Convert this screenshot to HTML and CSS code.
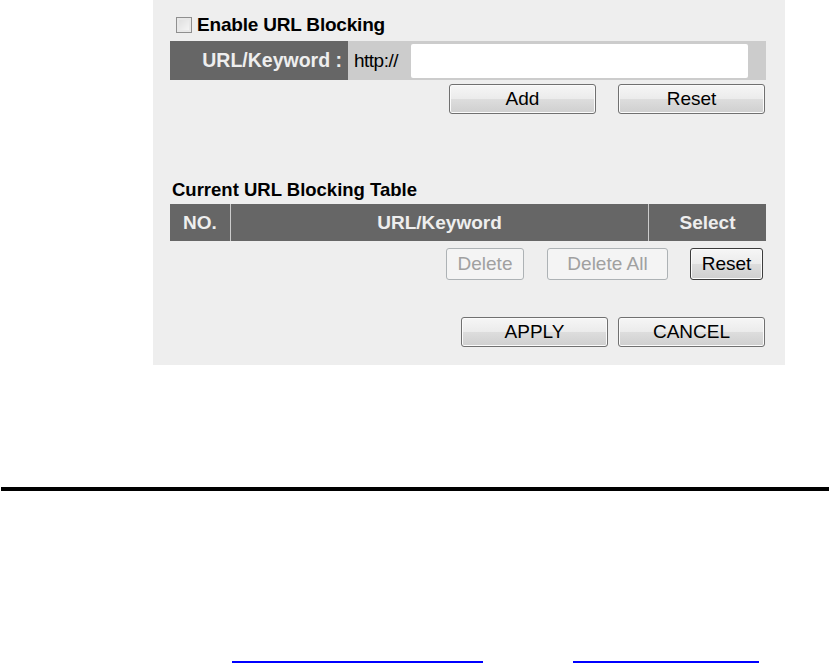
FILE: index.html
```html
<!DOCTYPE html>
<html>
<head>
<meta charset="utf-8">
<link rel="stylesheet" href="styles.css">
</head>
<body>
<div class="panel">
  <label class="enable"><span class="chk"></span>Enable URL Blocking</label>
  <div class="urlrow">
    <div class="urllabel">URL/Keyword :</div>
    <div class="urlcell"><span class="proto">http://</span><span class="input"></span></div>
  </div>
  <div class="btnrow r1">
    <span class="btn w147">Add</span>
    <span class="btn w147">Reset</span>
  </div>
  <div class="tabletitle">Current URL Blocking Table</div>
  <div class="thead">
    <div class="th no">NO.</div>
    <div class="th kw">URL/Keyword</div>
    <div class="th sel">Select</div>
  </div>
  <div class="btnrow r2">
    <span class="btn dis wdel">Delete</span>
    <span class="btn dis wdelall">Delete All</span>
    <span class="btn dark wreset">Reset</span>
  </div>
  <div class="btnrow r3">
    <span class="btn w147">APPLY</span>
    <span class="btn w147">CANCEL</span>
  </div>
</div>
<div class="rule"></div>
<div class="links">
  <a class="lnk l1" href="#"></a>
  <a class="lnk l2" href="#"></a>
</div>
</body>
</html>
```
FILE: styles.css
```css
html, body { margin: 0; padding: 0; background: #ffffff; }
body { width: 829px; height: 664px; overflow: hidden; font-family: "Liberation Sans", Arial, sans-serif; }

.panel {
  margin-left: 153px;
  width: 632px;
  height: 365px;
  background: #eeeeee;
  padding: 14px 19px 0 17px;
  box-sizing: border-box;
  display: flex;
  flex-direction: column;
}

.enable {
  display: flex;
  align-items: center;
  height: 22px;
  font-weight: bold;
  font-size: 19px;
  color: #000;
  letter-spacing: -0.2px;
}
.chk {
  width: 14px;
  height: 14px;
  border: 1px solid #8f8f8f;
  background: linear-gradient(135deg, #dcdcdc, #f8f8f8);
  box-shadow: inset 0 0 0 2px #e8e8e8;
  margin: 0 5px 0 6px;
}

.urlrow {
  display: flex;
  height: 39px;
  margin-top: 5px;
}
.urllabel {
  width: 178px;
  background: #666666;
  color: #eeeeee;
  font-weight: bold;
  font-size: 19.5px;
  display: flex;
  align-items: center;
  justify-content: flex-end;
  padding-right: 6px;
  box-sizing: border-box;
}
.urlcell {
  flex: 1;
  background: #cccccc;
  display: flex;
  align-items: center;
  padding: 0 18px 0 6px;
}
.proto { font-size: 19px; color: #000; width: 57px; letter-spacing: -0.5px; }
.input {
  flex: 1;
  height: 34px;
  background: #ffffff;
  border-radius: 2px;
}

.btnrow {
  display: flex;
  justify-content: flex-end;
}
.r1 { margin-top: 4px; gap: 22px; padding-right: 1px; }
.r2 { margin-top: 7px; gap: 0; padding-right: 3px; }
.r3 { margin-top: 37px; gap: 10px; padding-right: 1px; }

.btn {
  display: flex;
  align-items: center;
  justify-content: center;
  box-sizing: border-box;
  height: 30px;
  border: 1px solid #707070;
  border-radius: 3px;
  background: linear-gradient(#f6f6f6 0%, #ebebeb 50%, #dddddd 51%, #cfcfcf 100%);
  box-shadow: inset 0 0 0 1px #fbfbfb;
  font-size: 19px;
  color: #000;
}
.w147 { width: 147px; }
.r2 .btn { height: 32px; }
.wdel { width: 78px; }
.wdelall { width: 121px; margin-left: 23px; }
.wreset { width: 73px; margin-left: 22px; }
.dis {
  border-color: #adb2b5;
  background: #f4f4f4;
  color: #a0a0a0;
  box-shadow: none;
}
.dark { border-color: #3c3c3c; }

.tabletitle {
  margin-top: 66px;
  height: 20px;
  font-weight: bold;
  font-size: 18.5px;
  padding-left: 2px;
  display: flex;
  align-items: center;
}
.thead {
  display: flex;
  height: 37px;
  margin-top: 4px;
  background: #666666;
}
.th {
  color: #eeeeee;
  font-weight: bold;
  font-size: 19px;
  display: flex;
  align-items: center;
  justify-content: center;
}
.no { width: 60px; border-right: 1px solid #cccccc; }
.kw { width: 417px; border-right: 1px solid #cccccc; }
.sel { flex: 1; }

.rule {
  margin-top: 122px;
  height: 4px;
  background: #000;
  margin-left: 1px;
}

.links {
  display: flex;
  margin-top: 170px;
  padding-left: 232px;
}
.lnk {
  display: block;
  height: 2px;
  background: #0000ff;
}
.l1 { width: 251px; }
.l2 { width: 186px; margin-left: 90px; }
```
